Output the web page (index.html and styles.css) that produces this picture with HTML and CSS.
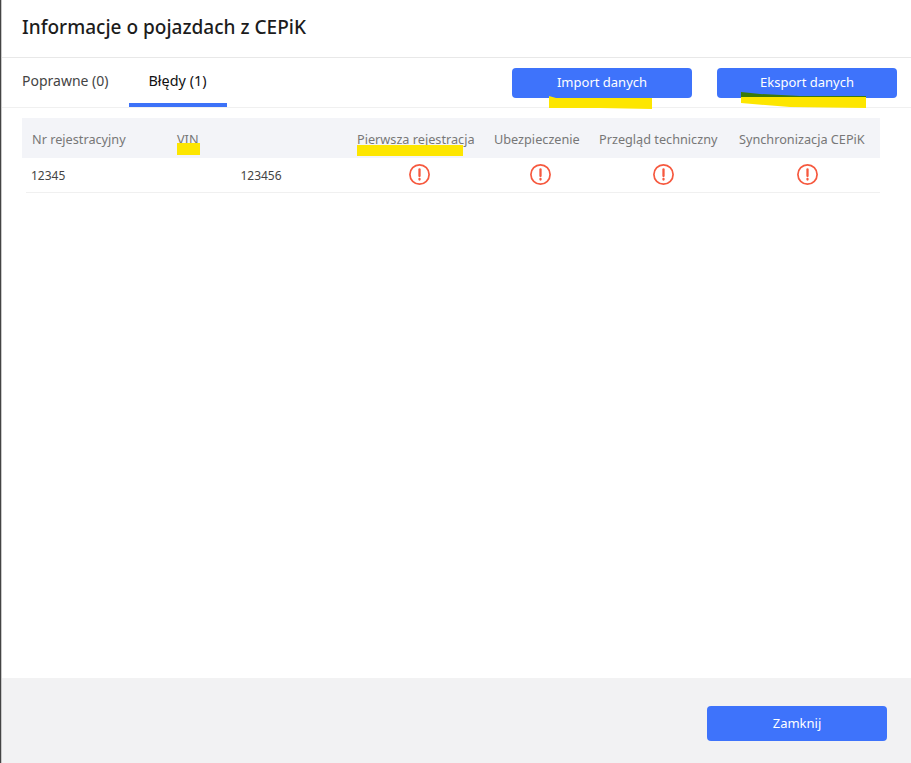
FILE: index.html
```html
<!DOCTYPE html>
<html lang="pl">
<head>
    <meta charset="UTF-8">
    <meta name="viewport" content="width=device-width, initial-scale=1.0">
    <title>Informacje o pojazdach z CEPiK</title>
    <link rel="stylesheet" href="styles.css">
</head>
<body>
    <div class="dialog">
        <div class="dialog-header">
            <h1>Informacje o pojazdach z CEPiK</h1>
        </div>
        <div class="toolbar">
            <div class="tabs">
                <div class="tab">Poprawne (0)</div>
                <div class="tab active">Błędy (1)</div>
            </div>
            <div class="actions">
                <button class="btn">Import danych</button>
                <button class="btn">Eksport danych</button>
            </div>
        </div>
        <div class="dialog-body">
            <table class="results">
                <thead>
                    <tr>
                        <th class="col-plate">Nr rejestracyjny</th>
                        <th class="col-vin">VIN</th>
                        <th class="col-first">Pierwsza rejestracja</th>
                        <th class="col-insurance">Ubezpieczenie</th>
                        <th class="col-inspection">Przegląd techniczny</th>
                        <th class="col-sync">Synchronizacja CEPiK</th>
                    </tr>
                </thead>
                <tbody>
                    <tr>
                        <td class="plate">12345</td>
                        <td>123456</td>
                        <td><svg class="warn" viewBox="0 0 21 21"><circle cx="10.5" cy="10.5" r="9.6"/><path d="M10.5 5.5v6.5"/><path d="M10.5 15v.6"/></svg></td>
                        <td><svg class="warn" viewBox="0 0 21 21"><circle cx="10.5" cy="10.5" r="9.6"/><path d="M10.5 5.5v6.5"/><path d="M10.5 15v.6"/></svg></td>
                        <td><svg class="warn" viewBox="0 0 21 21"><circle cx="10.5" cy="10.5" r="9.6"/><path d="M10.5 5.5v6.5"/><path d="M10.5 15v.6"/></svg></td>
                        <td class="sync"><svg class="warn" viewBox="0 0 21 21"><circle cx="10.5" cy="10.5" r="9.6"/><path d="M10.5 5.5v6.5"/><path d="M10.5 15v.6"/></svg></td>
                    </tr>
                </tbody>
            </table>
        </div>
        <div class="dialog-footer">
            <button class="btn btn-close">Zamknij</button>
        </div>
    </div>

    <!-- yellow marker strokes drawn over the screenshot -->
    <svg class="marks" viewBox="0 0 911 763">
        <polygon class="mark" points="549,96 556,98 652,98 652,109 600,108 549,108"/>
        <polygon class="mark" points="741,97 866,97 866,108 790,107 741,103"/>
        <polygon class="mark-dark" points="741,92 760,94 800,96 866,96 866,97 741,97"/>
        <rect class="mark" x="177" y="143" width="23" height="12"/>
        <rect class="mark" x="357" y="145" width="106" height="11"/>
    </svg>
</body>
</html>
```

FILE: styles.css
```css
html, body {
    margin: 0;
    height: 100%;
}
body {
    font-family: "Noto Sans", "Open Sans", Arial, sans-serif;
    background-color: #fff;
    color: #222;
    overflow: hidden;
}
.dialog {
    display: flex;
    flex-direction: column;
    height: 763px;
    padding-left: 2px;
    box-sizing: border-box;
    background: linear-gradient(90deg, #444 1px, #c8c8c8 1px, #c8c8c8 2px, #fff 2px);
}
.dialog-header {
    height: 54px;
    padding: 0 0 3px 20px;
    display: flex;
    align-items: center;
    border-bottom: 1px solid #e8e8e8;
}
h1 {
    margin: 0;
    font-size: 19.05px;
    font-weight: 500;
    color: #1c1c1c;
}
.toolbar {
    height: 49px;
    display: flex;
    justify-content: space-between;
    border-bottom: 1px solid #f0f0f0;
}
.tabs {
    display: flex;
    padding-left: 20px;
    gap: 40px;
}
.tab {
    font-size: 14px;
    color: #444;
    height: 49px;
    line-height: 46px;
    box-sizing: border-box;
}
.tab.active {
    color: #111;
    font-size: 14.4px;
    margin-left: -20px;
    padding: 0 20px;
    border-bottom: 4px solid #3d72f8;
}
.actions {
    display: flex;
    gap: 25px;
    padding: 10px 14px 0 0;
}
.btn {
    width: 180px;
    height: 30px;
    padding: 0 0 2px;
    border: none;
    border-radius: 4px;
    background-color: #3e73fb;
    color: #fff;
    font-family: inherit;
    font-size: 13px;
    cursor: pointer;
}
.dialog-body {
    flex: 1;
    padding: 10px 0 0 20px;
}
.results {
    border-collapse: separate;
    border-spacing: 0;
    table-layout: fixed;
    width: 858px;
    font-size: 12.7px;
}
.results th {
    height: 40px;
    padding: 2px 0 0 10px;
    box-sizing: border-box;
    background-color: #f3f4f8;
    color: #777;
    font-weight: 400;
    text-align: left;
    white-space: nowrap;
}
.results th.col-plate { width: 145px; }
.results th.col-vin { width: 180px; }
.results th.col-first { width: 137px; }
.results th.col-insurance { width: 105px; }
.results th.col-inspection { width: 140px; }
.results td {
    height: 35px;
    padding: 0 10px 0 18px;
    box-sizing: border-box;
    border-bottom: 1px solid #f0f0f0;
    text-align: center;
    color: #444;
    font-size: 12px;
}
.results td.plate {
    padding-left: 9px;
    text-align: left;
    border-bottom-color: transparent;
    background: linear-gradient(#f0f0f0, #f0f0f0) no-repeat 4px 100% / 100% 1px border-box;
}
.results td.sync {
    padding-right: 13px;
}
.warn {
    display: block;
    width: 21px;
    height: 21px;
    margin: -1px auto 0;
    fill: none;
    stroke: #f6593f;
    stroke-width: 1.7;
}
.warn path {
    stroke-width: 2.3;
    stroke-linecap: round;
}
.dialog-footer {
    height: 85px;
    padding: 28px 24px 0 0;
    box-sizing: border-box;
    background-color: #f2f2f3;
    display: flex;
    justify-content: flex-end;
}
.btn-close {
    height: 35px;
    font-size: 13px;
}
.marks {
    position: absolute;
    left: 0;
    top: 0;
    width: 911px;
    height: 763px;
    pointer-events: none;
}
.mark {
    fill: #fde600;
}
.mark-dark {
    fill: #3c7a0a;
}
```
